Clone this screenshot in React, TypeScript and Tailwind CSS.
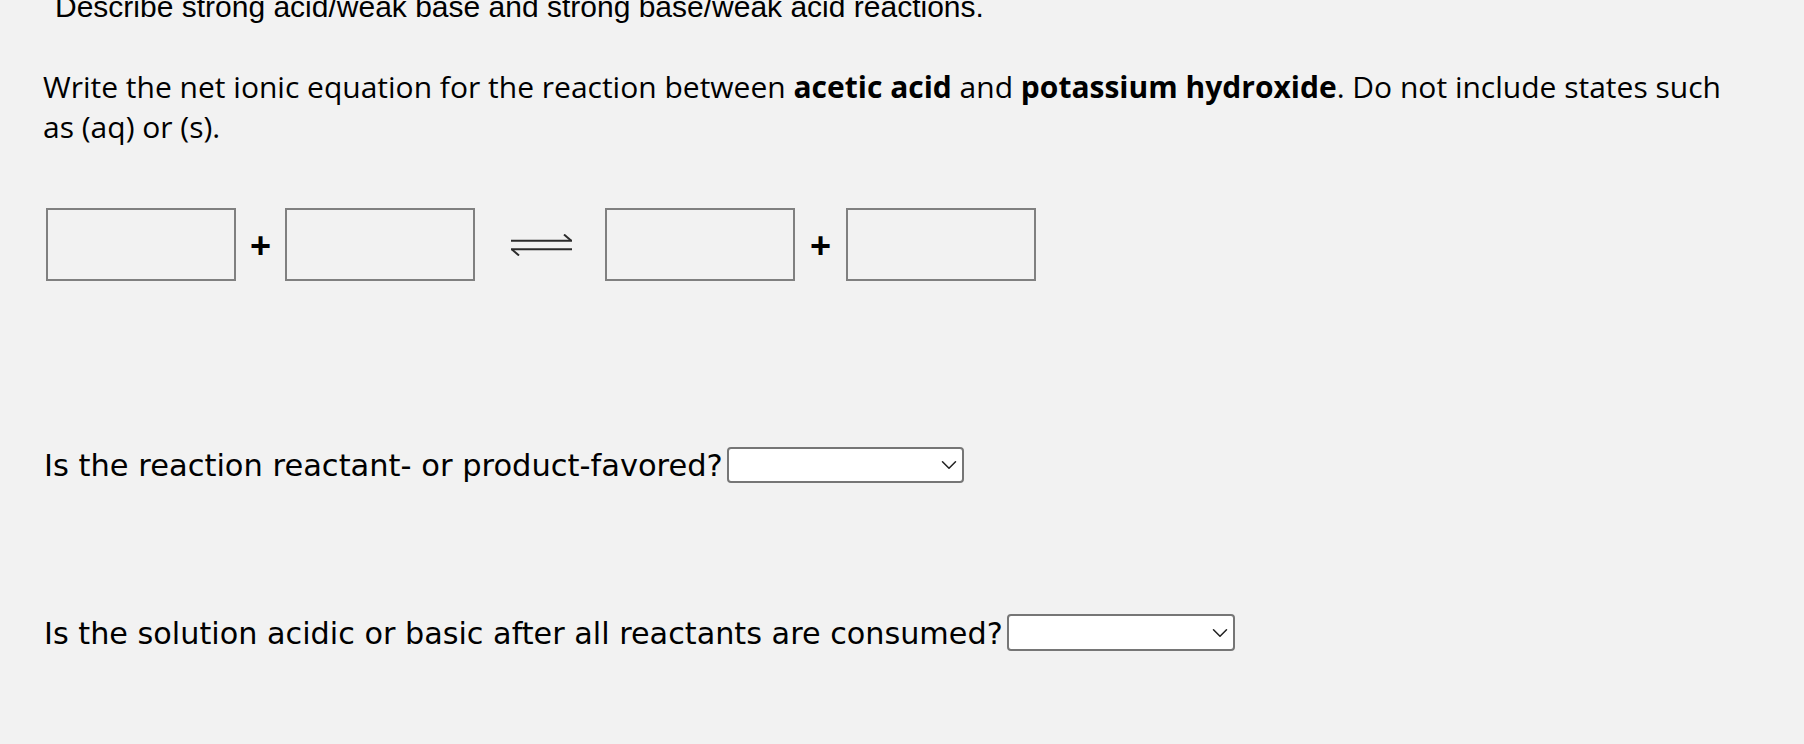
import { ChevronDown } from 'lucide-react';

const AnswerBox = () => (
  <input
    type="text"
    aria-label="answer"
    className="w-[190px] h-[73px] border-2 border-[#808080] bg-transparent outline-none"
  />
);

const Plus = ({ w }: { w: string }) => (
  <span
    className={`${w} flex justify-center text-[36px] font-bold leading-none text-black translate-y-[1px]`}
    style={{ fontFamily: '"Liberation Sans", Arial, sans-serif' }}
  >
    +
  </span>
);

const EquilibriumArrow = () => (
  <svg width="61" height="22" viewBox="0 0 61 22" className="ml-[36px] mr-[33px]">
    <g stroke="#2b2b2b" strokeWidth="2" fill="none" strokeLinecap="butt">
      <line x1="0" y1="6.7" x2="61" y2="6.7" />
      <line x1="53" y1="0.5" x2="60" y2="6.5" />
      <line x1="0" y1="15.3" x2="61" y2="15.3" />
      <line x1="1" y1="15.5" x2="8" y2="21.5" />
    </g>
  </svg>
);

const Dropdown = ({ width, height }: { width: string; height: string }) => (
  <div className={`relative ${width} ${height} ml-1`}>
    <select
      aria-label="answer"
      className="appearance-none w-full h-full bg-white border-2 border-[#767676] rounded-[4px] outline-none"
    >
      <option value=""></option>
    </select>
    <ChevronDown
      size={26}
      strokeWidth={1.4}
      className="absolute right-[2px] top-1/2 -translate-y-1/2 text-[#222] pointer-events-none"
    />
  </div>
);

const App = () => {
  return (
    <div className="min-h-screen w-full bg-[#f2f2f2] overflow-hidden text-black">
      <div
        className="-mt-2 pl-[55px] text-[30px] leading-[30px]"
        style={{ fontFamily: '"Liberation Sans", Arial, sans-serif' }}
      >
        Describe strong acid/weak base and strong base/weak acid reactions.
      </div>

      <p
        className="mt-[45px] ml-[43px] w-[1700px] text-[30px] leading-[40px]"
        style={{ fontFamily: '"Open Sans", "Noto Sans", sans-serif' }}
      >
        Write the net ionic equation for the reaction between <b className="font-bold">acetic acid</b> and{' '}
        <b className="font-bold">potassium hydroxide</b>. Do not include states such as (aq) or (s).
      </p>

      {/* equation row */}
      <div className="mt-[61px] ml-[46px] flex items-center">
        <AnswerBox />
        <Plus w="w-[49px]" />
        <AnswerBox />
        <EquilibriumArrow />
        <AnswerBox />
        <Plus w="w-[51px]" />
        <AnswerBox />
      </div>

      <div
        className="mt-[166px] ml-[44px] flex items-center h-[36px] text-[30.5px]"
        style={{ fontFamily: '"DejaVu Sans", Verdana, sans-serif' }}
      >
        <span className="translate-y-[1px]">Is the reaction reactant- or product-favored?</span>
        <Dropdown width="w-[237px]" height="h-[36px]" />
      </div>

      <div
        className="mt-[131px] ml-[44px] flex items-center h-[37px] text-[30.25px]"
        style={{ fontFamily: '"DejaVu Sans", Verdana, sans-serif' }}
      >
        <span className="translate-y-[1px]">Is the solution acidic or basic after all reactants are consumed?</span>
        <Dropdown width="w-[228px]" height="h-[37px]" />
      </div>
    </div>
  );
};

export default App;
